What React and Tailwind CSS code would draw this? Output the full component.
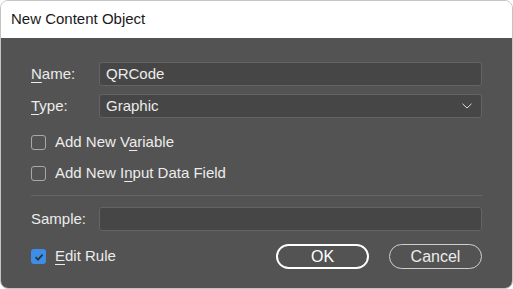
import { useState } from "react";

const U = ({ children }) => <span className="underline underline-offset-[3px] decoration-1">{children}</span>;

const Check = ({ checked, label }) => (
  <div className="flex items-center gap-[9px] h-[15px]">
    {checked ? (
      <div className="w-[15px] h-[15px] rounded-[3px] bg-[#3f8ee6] flex items-center justify-center">
        <svg width="10" height="10" viewBox="0 0 10 10">
          <path d="M1.5 5.2 L4 7.6 L8.6 2.6" fill="none" stroke="#2b3440" strokeWidth="1.8" />
        </svg>
      </div>
    ) : (
      <div className="w-[15px] h-[15px] rounded-[3px] border border-[#a8a8a8]" />
    )}
    <span>{label}</span>
  </div>
);

export default function App() {
  const [name] = useState("QRCode");

  return (
    <div className="w-[513px] h-[289px] bg-white" style={{ fontFamily: "'Liberation Sans', Arial, sans-serif" }}>
      <div className="w-full h-full rounded-lg border border-[#c4c4c4] overflow-hidden flex flex-col">
        <div className="h-[37px] bg-white flex items-center pl-[10px] text-[15px] text-[#1a1a1a]">
          New Content Object
        </div>
        <div className="flex-1 bg-[#535353] text-[#ececec] text-[15px] px-[30px] pt-[24px]">
          <div className="flex items-center h-[24px]">
            <span className="w-[68px]"><U>N</U>ame:</span>
            <div className="flex-1 h-[24px] bg-[#464646] border border-[#646464] rounded-[3px] flex items-center px-[6px]">
              {name}
            </div>
          </div>
          <div className="flex items-center h-[24px] mt-[8px]">
            <span className="w-[68px]"><U>T</U>ype:</span>
            <div className="flex-1 h-[24px] bg-[#464646] border border-[#646464] rounded-[3px] flex items-center justify-between px-[6px]">
              <span>Graphic</span>
              <svg width="10" height="6" viewBox="0 0 10 6" className="mr-[3px]">
                <path d="M0.5 0.8 L5 5 L9.5 0.8" fill="none" stroke="#dcdcdc" strokeWidth="1" />
              </svg>
            </div>
          </div>
          <div className="mt-[17px] flex flex-col gap-[16px]">
            <Check label={<>Add New V<U>a</U>riable</>} />
            <Check label={<>Add New I<U>n</U>put Data Field</>} />
          </div>
          <div className="h-px bg-[#666666] mt-[14px]" />
          <div className="flex items-center h-[24px] mt-[11px]">
            <span className="w-[68px]">Sample:</span>
            <div className="flex-1 h-[24px] bg-[#464646] border border-[#646464] rounded-[3px]" />
          </div>
          <div className="flex items-center justify-between mt-[13px]">
            <Check checked label={<><U>E</U>dit Rule</>} />
            <div className="flex gap-[20px]">
              <button className="w-[93px] h-[25px] rounded-full border-2 border-white text-white text-[16px] flex items-center justify-center">
                OK
              </button>
              <button className="w-[93px] h-[25px] rounded-full border border-[#cfcfcf] text-[#ececec] text-[16px] flex items-center justify-center">
                Cancel
              </button>
            </div>
          </div>
        </div>
      </div>
    </div>
  );
}
